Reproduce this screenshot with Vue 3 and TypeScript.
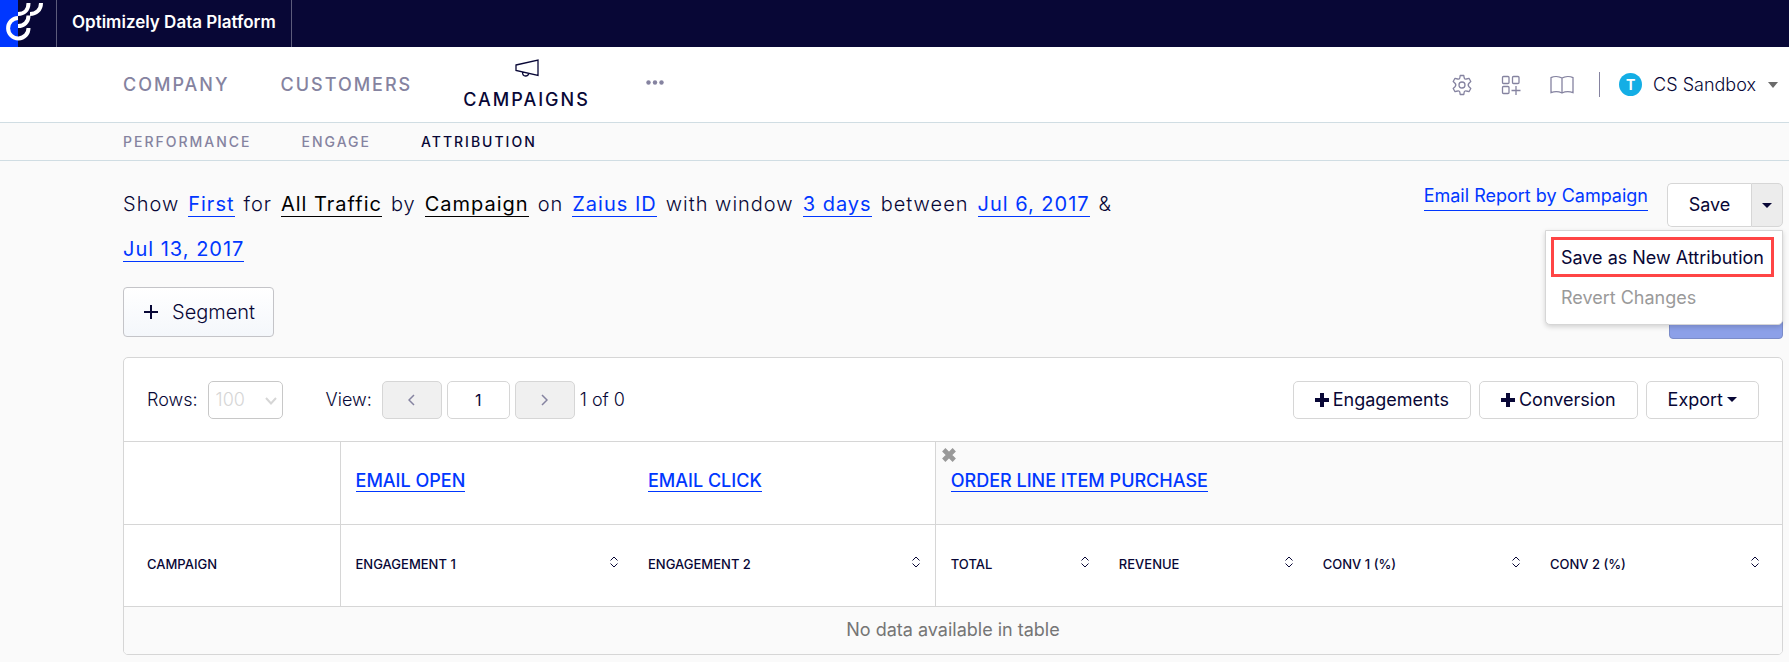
<script setup lang="ts">
import { ref } from 'vue'

interface Token { text: string; kind?: 'link' | 'fixed' }

const sentence: Token[] = [
  { text: 'Show' }, { text: 'First', kind: 'link' }, { text: 'for' },
  { text: 'All Traffic', kind: 'fixed' }, { text: 'by' },
  { text: 'Campaign', kind: 'fixed' }, { text: 'on' },
  { text: 'Zaius ID', kind: 'link' }, { text: 'with window' },
  { text: '3 days', kind: 'link' }, { text: 'between' },
  { text: 'Jul 6, 2017', kind: 'link' }, { text: '&' },
  { text: 'Jul 13, 2017', kind: 'link' },
]

const columns = [
  { label: 'Engagement 1' }, { label: 'Engagement 2' },
  { label: 'Total', divided: true }, { label: 'Revenue' },
  { label: 'Conv 1 (%)' }, { label: 'Conv 2 (%)' },
]

const page = ref('1')
const rows = ref('100')
</script>

<template>
  <div class="app">
    <header class="topbar">
      <a class="logo" href="#" aria-label="Home">
        <svg width="56" height="47" viewBox="0 0 56 47" fill="none">
          <rect width="18" height="47" fill="#0037ff" />
          <g stroke="#fff" stroke-width="4">
            <path d="M18 18A10.200 10.200 0 1 0 28.500 28" />
            <path d="M18 26C24 26 28.500 22 28.500 15.500" />
            <path d="M18 14C24 14 28.500 10 28.500 3" />
            <path d="M30 14C36 14 41 10 41 3" />
          </g>
        </svg>
      </a>
      <span class="product">Optimizely Data Platform</span>
    </header>

    <nav class="nav" aria-label="Main">
      <a href="#">COMPANY</a>
      <a href="#">CUSTOMERS</a>
      <a href="#" class="active">
        <svg width="24" height="18" viewBox="0 0 24 18" fill="none" stroke="currentColor" stroke-width="1.300">
          <path d="M1 6L23 1V16.500L1 11.500ZM7.500 13C7.500 15 8.500 17 10.500 17S13.500 15.500 13.500 14.500" />
        </svg>
        CAMPAIGNS
      </a>
      <button class="more" aria-label="More">
        <svg width="18" height="5" viewBox="0 0 18 5" fill="currentColor">
          <circle cx="2.500" cy="2.500" r="2.200" /><circle cx="9" cy="2.500" r="2.200" /><circle cx="15.500" cy="2.500" r="2.200" />
        </svg>
      </button>
      <div class="tools">
        <button aria-label="Settings">
          <svg width="20" height="22" viewBox="0 0 20 22" fill="none" stroke="currentColor" stroke-width="1.300" stroke-linejoin="round">
            <path d="M8.200 1.500H11.800L12.200 4C12.600 5 13.400 5.300 14.300 5L17 4.300L18.800 7.500L17 9.200C16 10.300 16 11.700 17 12.800L18.800 14.500L17 17.700L14.300 17C13.400 16.700 12.600 17 12.200 18L11.800 20.500H8.200L7.800 18C7.400 17 6.600 16.700 5.700 17L3 17.700L1.200 14.500L3 12.800C4 11.700 4 10.300 3 9.200L1.200 7.500L3 4.300L5.700 5C6.600 5.300 7.400 5 7.800 4Z" />
            <circle cx="10" cy="11" r="3" />
          </svg>
        </button>
        <button aria-label="Apps">
          <svg width="20" height="20" viewBox="0 0 20 20" fill="none" stroke="currentColor" stroke-width="1.300">
            <rect x="1.500" y="1.500" width="6.500" height="7" rx="1" /><rect x="11.500" y="1.500" width="6.500" height="7" rx="1" />
            <rect x="1.500" y="11.500" width="6.500" height="7" rx="1" /><path d="M15 11V20M10.500 15.500H19.500" />
          </svg>
        </button>
        <button aria-label="Documentation">
          <svg width="24" height="18" viewBox="0 0 24 18" fill="none" stroke="currentColor" stroke-width="1.300">
            <path d="M12 2C9 .4 4 .2 1 1.600V16.600C4 15.500 9 15.500 12 17C15 15.500 20 15.500 23 16.600V1.600C20 .2 15 .4 12 2ZM12 2V17" />
          </svg>
        </button>
        <span class="rule"></span>
        <button class="account">
          <span class="avatar">T</span>
          CS Sandbox
          <span class="caret"></span>
        </button>
      </div>
    </nav>

    <nav class="subnav" aria-label="Campaigns">
      <a href="#">PERFORMANCE</a>
      <a href="#">ENGAGE</a>
      <a href="#" class="active">ATTRIBUTION</a>
    </nav>

    <main class="main">
      <div class="head">
        <div class="sentence">
          <template v-for="t in sentence" :key="t.text">
            <a v-if="t.kind" href="#" :class="t.kind">{{ t.text }}</a>
            <span v-else>{{ t.text }}</span>
          </template>
        </div>
        <div class="actions">
          <a href="#" class="report">Email Report by Campaign</a>
          <div class="split">
            <button class="save">Save</button>
            <button class="toggle" aria-label="More save options"><span class="caret"></span></button>
            <ul class="menu">
              <li><button class="marked">Save as New Attribution</button></li>
              <li><button disabled>Revert Changes</button></li>
            </ul>
          </div>
        </div>
      </div>

      <div class="run">
        <button class="segment">
          <svg width="14" height="14" viewBox="0 0 14 14" stroke="currentColor" stroke-width="2"><path d="M7 0V14M0 7H14" /></svg>
          Segment
        </button>
        <button class="primary" aria-label="Run"></button>
      </div>

      <section class="panel">
        <div class="toolbar">
          <label for="rows">Rows:</label>
          <div class="select">
            <select id="rows" v-model="rows" disabled><option>100</option></select>
            <svg width="12" height="8" viewBox="0 0 12 8" fill="none" stroke="#d6d6d6" stroke-width="2"><path d="M1 1L6 6.500L11 1" /></svg>
          </div>
          <label for="page">View:</label>
          <div class="pager">
            <button class="step" aria-label="Previous page"><svg width="7" height="12" viewBox="0 0 7 12" fill="none" stroke="currentColor" stroke-width="1.500"><path d="M6 1L1 6L6 11" /></svg></button>
            <input id="page" v-model="page" type="text">
            <button class="step" aria-label="Next page"><svg width="7" height="12" viewBox="0 0 7 12" fill="none" stroke="currentColor" stroke-width="1.500"><path d="M1 1L6 6L1 11" /></svg></button>
            <span>1 of 0</span>
          </div>
          <div class="buttons">
            <button><svg width="14" height="14" viewBox="0 0 14 14" stroke="currentColor" stroke-width="4"><path d="M7 0V14M0 7H14" /></svg>Engagements</button>
            <button><svg width="14" height="14" viewBox="0 0 14 14" stroke="currentColor" stroke-width="4"><path d="M7 0V14M0 7H14" /></svg>Conversion</button>
            <button>Export<span class="caret"></span></button>
          </div>
        </div>

        <table>
          <colgroup><col class="c1"><col class="c2"><col class="c3"><col class="c4"><col class="c5"><col class="c6"><col class="c7"></colgroup>
          <thead>
            <tr class="groups">
              <td></td>
              <th class="divided"><a href="#">EMAIL OPEN</a></th>
              <th><a href="#">EMAIL CLICK</a></th>
              <th class="divided shaded" colspan="4">
                <button class="remove" aria-label="Remove">
                  <svg width="14" height="14" viewBox="0 0 12 12" stroke="#999" stroke-width="4"><path d="M1.500 1.500L10.500 10.500M10.500 1.500L1.500 10.500" /></svg>
                </button>
                <a href="#">ORDER LINE ITEM PURCHASE</a>
              </th>
            </tr>
            <tr class="fields">
              <th>CAMPAIGN</th>
              <th v-for="(c, i) in columns" :key="c.label" :class="{ divided: c.divided || i === 0 }">
                <button>
                  {{ c.label }}
                  <svg width="8" height="12" viewBox="0 0 8 12" fill="none" stroke="currentColor"><path d="M.5 4.500L4 1L7.500 4.500M.5 7.500L4 11L7.500 7.500" /></svg>
                </button>
              </th>
            </tr>
          </thead>
          <tbody><tr><td colspan="7" class="empty">No data available in table</td></tr></tbody>
        </table>
      </section>
    </main>
  </div>
</template>

<style>
body { background: #fafafa; }
</style>

<style scoped>
.app, .app * { box-sizing: border-box; }
.app { font: 400 18px/24px Inter, "Liberation Sans", sans-serif; color: #080736; }
button, input, select { font: inherit; color: inherit; letter-spacing: inherit; margin: 0; }
button { padding: 0; border: 0; background: none; cursor: pointer; }
a { text-decoration: none; color: inherit; }
svg { display: block; flex: none; }
.caret { width: 0; height: 0; border: 5px solid transparent; border-top-color: currentColor; border-bottom: 0; }

.topbar { display: flex; height: 47px; background: #080736; color: #fff; }
.logo { border-right: 1px solid #5c5b7b; }
.product { padding: 10px 15px 0; border-right: 1px solid #5c5b7b; font-size: 17px; font-weight: 600; }

.nav { display: flex; align-items: center; height: 76px; padding: 0 11px 0 123px; background: #fff; border-bottom: 1px solid #d0dde3; font-weight: 500; letter-spacing: 2px; color: #8583a0; }
.nav > a { margin-right: 51px; }
.nav .active { display: flex; flex-direction: column; align-items: center; gap: 11px; padding-top: 2px; color: #080736; }
.more { padding: 0 5px 4px; }
.tools { display: flex; align-items: center; margin-left: auto; color: #8583a0; letter-spacing: 0; }
.tools button { margin-right: 29px; }
.tools button:nth-child(3) { margin-right: 25px; }
.rule { width: 1px; height: 25px; background: #8583a0; margin-right: 19px; }
.tools .account { display: flex; align-items: center; margin: 0; color: #080736; font-weight: 300; }
.avatar { width: 23px; height: 23px; margin-right: 11px; border-radius: 50%; background: #14aee5; color: #fff; font-size: 14px; line-height: 23px; font-weight: 700; }
.account .caret { margin-left: 12px; border-top-width: 6px; color: #6b6b6b; }

.subnav { display: flex; align-items: center; gap: 50px; height: 38px; padding-left: 123px; border-bottom: 1px solid #d0dde3; font-size: 14px; font-weight: 500; letter-spacing: 2px; color: #8583a0; }
.subnav .active { color: #080736; }

.main { padding: 22px 6px 8px 123px; }
.head { display: flex; justify-content: space-between; align-items: flex-start; }
.sentence { display: flex; flex-wrap: wrap; align-items: flex-start; gap: 20px 9px; max-width: 1040px; padding-top: 9px; font-size: 20px; font-weight: 300; letter-spacing: 1px; }
.sentence a { font-weight: 400; border-bottom: 1px solid; }
.link, .report, .groups a { color: #0037ff; }
.fixed { color: #000; }
.actions { display: flex; flex: none; gap: 19px; }
.report { align-self: flex-start; padding: 1px 0 2px; border-bottom: 1px solid; }
.split { position: relative; display: flex; height: 44px; }
.save { width: 84px; background: #fff; border: 1px solid #d6d6d6; border-right: 0; border-radius: 5px 0 0 5px; }
.toggle { display: grid; place-items: center; width: 32px; background: #ececec; border: 1px solid #d6d6d6; border-radius: 0 5px 5px 0; }
.menu { position: absolute; top: 47px; right: 0; z-index: 1; margin: 0; padding: 6px 8px 7px 5px; list-style: none; background: #fff; border: 1px solid #d6d6d6; border-radius: 0 0 5px 5px; box-shadow: 0 2px 5px rgb(0 0 0 / 16%); }
.menu button { display: block; width: 100%; height: 40px; padding: 1px 7px 0; border: 3px solid transparent; text-align: left; white-space: nowrap; }
.menu .marked { border-color: #ff4545; }
.menu button:disabled { color: #9a9a9a; }

.run { display: flex; justify-content: space-between; align-items: flex-start; margin: 25px 0 18px; }
.segment { display: flex; align-items: center; gap: 14px; height: 50px; padding: 0 18px 0 20px; font-size: 20px; font-weight: 300; background: linear-gradient(#fff, #f4f7fb); border: 1px solid #c4c4c8; border-radius: 4px; }
.primary { width: 114px; height: 52px; background: #8ca0e8; border: 1px solid #7b8cc9; border-radius: 4px; }

.panel { background: #fff; border: 1px solid #d6d6d6; border-radius: 5px; overflow: hidden; }
.toolbar { display: flex; align-items: center; height: 83px; padding: 0 23px; font-weight: 300; }
.select { position: relative; width: 75px; margin: 0 43px 0 10px; }
.select select { width: 100%; height: 38px; padding: 0 7px; appearance: none; background: #fff; border: 1px solid #c8c8c8; border-radius: 5px; color: #d6d6d6; opacity: 1; }
.select svg { position: absolute; right: 6px; top: 16px; pointer-events: none; }
.pager { display: flex; align-items: center; gap: 5px; margin-left: 10px; }
.step { display: grid; place-items: center; width: 60px; height: 38px; background: #f0f0f0; border: 1px solid #d6d6d6; border-radius: 5px; color: #8583a0; }
.pager input { width: 63px; height: 38px; padding: 0; text-align: center; border: 1px solid #d6d6d6; border-radius: 5px; font-size: 16px; font-weight: 400; }
.buttons { display: flex; gap: 8px; margin-left: auto; font-weight: 400; }
.buttons button { display: flex; align-items: center; gap: 4px; height: 38px; padding: 0 21px; background: #fff; border: 1px solid #d6d6d6; border-radius: 5px; }

table { width: 100%; table-layout: fixed; border-collapse: separate; border-spacing: 0; }
.c1 { width: 13%; } .c2 { width: 17.7%; } .c3 { width: 18.2%; } .c4 { width: 10.2%; } .c5 { width: 12.3%; } .c6 { width: 13.7%; } .c7 { width: 14.9%; }
th, td { padding: 0 0 0 15px; border-top: 1px solid #d6d6d6; text-align: left; }
th { font-weight: 500; }
tr > :first-child { padding-left: 23px; }
.divided { border-left: 1px solid #d6d6d6; }
.shaded { position: relative; background: #fafafa; }
.groups > * { height: 83px; padding-bottom: 4px; }
.groups a { border-bottom: 1px solid; }
.remove { position: absolute; left: 6px; top: 6px; }
.fields th { height: 82px; padding-bottom: 3px; font-size: 13px; text-transform: uppercase; }
.fields button { display: flex; justify-content: space-between; align-items: center; width: 100%; padding-right: 15px; text-transform: inherit; }
.fields svg { margin-bottom: 4px; }
.fields th:last-child button { padding-right: 23px; }
tr > .empty:first-child { height: 48px; padding: 0 0 2px; text-align: center; background: #fafafa; color: #757575; }
</style>
